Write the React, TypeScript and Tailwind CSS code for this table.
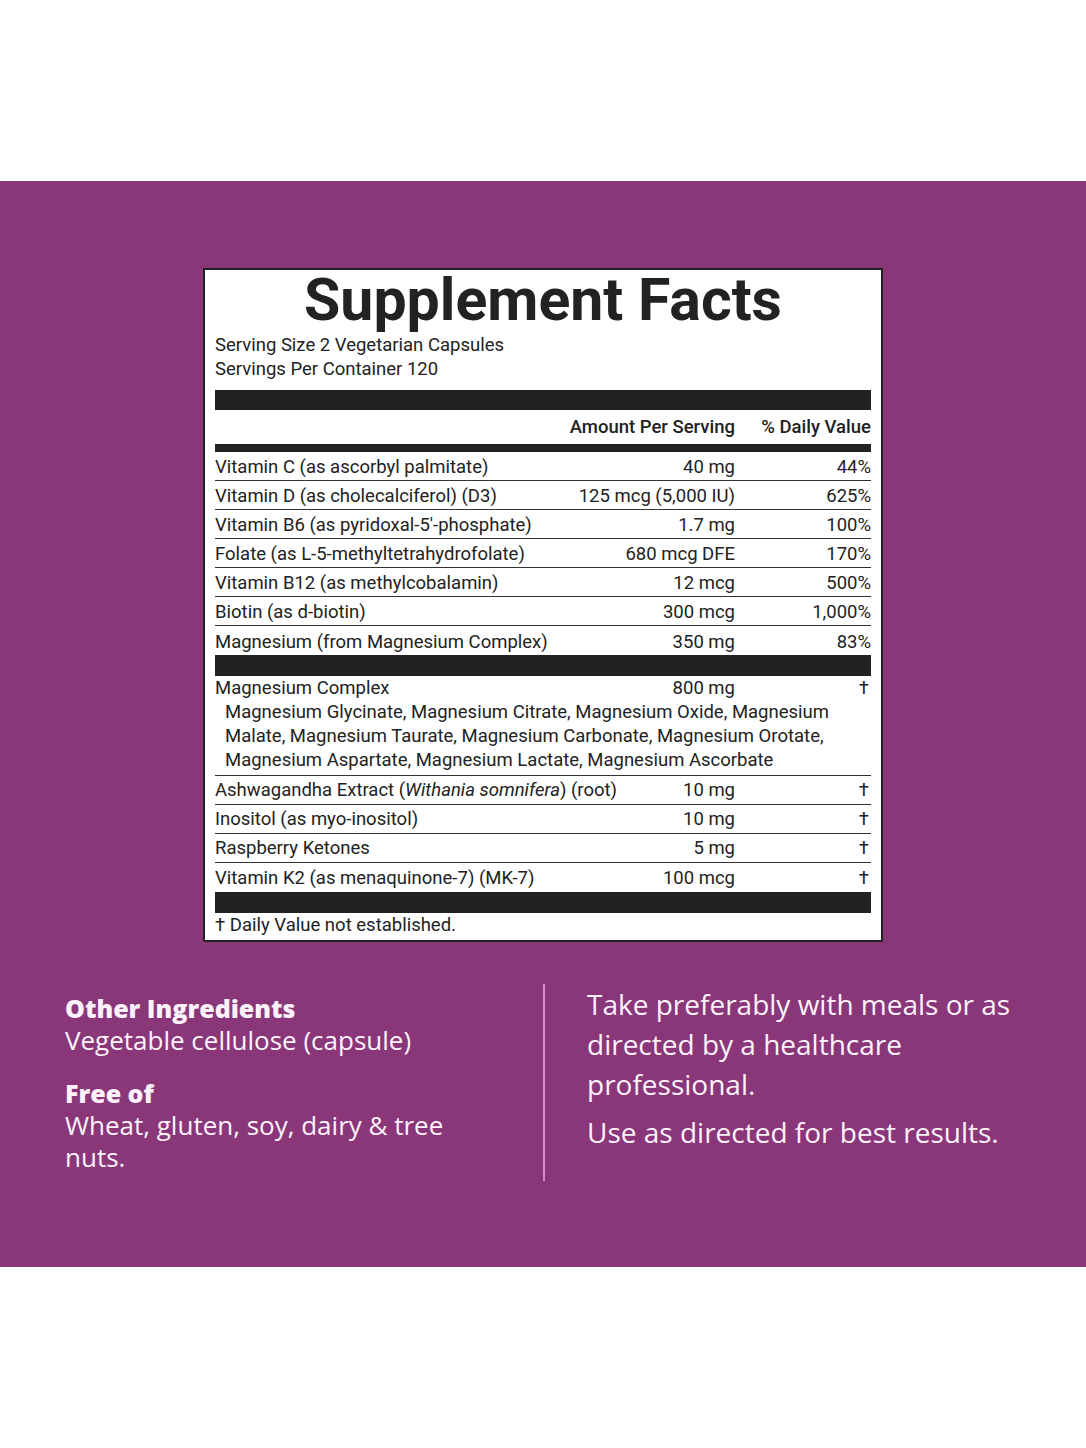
import React from "react";

const rows = [
  { name: "Vitamin C (as ascorbyl palmitate)", amount: "40 mg", dv: "44%" },
  { name: "Vitamin D (as cholecalciferol) (D3)", amount: "125 mcg (5,000 IU)", dv: "625%" },
  { name: "Vitamin B6 (as pyridoxal-5'-phosphate)", amount: "1.7 mg", dv: "100%" },
  { name: "Folate (as L-5-methyltetrahydrofolate)", amount: "680 mcg DFE", dv: "170%" },
  { name: "Vitamin B12 (as methylcobalamin)", amount: "12 mcg", dv: "500%" },
  { name: "Biotin (as d-biotin)", amount: "300 mcg", dv: "1,000%" },
  { name: "Magnesium (from Magnesium Complex)", amount: "350 mg", dv: "83%" },
];

const others = [
  {
    name: (
      <>
        Ashwagandha Extract (<i>Withania somnifera</i>) (root)
      </>
    ),
    amount: "10 mg",
  },
  { name: "Inositol (as myo-inositol)", amount: "10 mg" },
  { name: "Raspberry Ketones", amount: "5 mg" },
  { name: "Vitamin K2 (as menaquinone-7) (MK-7)", amount: "100 mcg" },
];

function Row({ name, amount, dv, last }: { name: React.ReactNode; amount: string; dv: string; last?: boolean }) {
  return (
    <div className={`flex items-center h-[29px] pt-[2px] ${last ? "" : "border-b border-[#333]"}`}>
      <div className="flex-1">{name}</div>
      <div className="text-right">{amount}</div>
      <div className="w-[136px] text-right">{dv}</div>
    </div>
  );
}

export default function App() {
  return (
    <div className="w-[1086px] h-[1448px] bg-white flex flex-col">
      <div className="h-[181px]" />
      <section className="h-[1086px] bg-[#893778] flex flex-col items-center pt-[87px]">
        {/* label */}
        <div className="w-[680px] bg-white border-2 border-[#222] px-[10px] text-[#222] font-['Roboto',sans-serif] text-[18.5px] leading-[24px]">
          <h1 className="text-center font-bold text-[59px] leading-[60px]">
            Supplement Facts
          </h1>
          <div className="mt-[3px]">Serving Size 2 Vegetarian Capsules</div>
          <div>Servings Per Container 120</div>
          <div className="h-[20px] bg-[#222] mt-[9px]" />
          <div className="flex items-center h-[34px] font-medium">
            <div className="flex-1" />
            <div className="text-right">Amount Per Serving</div>
            <div className="w-[136px] text-right">% Daily Value</div>
          </div>
          <div className="h-[8px] bg-[#222]" />
          {rows.map((r, i) => (
            <Row key={i} name={r.name} amount={r.amount} dv={r.dv} last={i === rows.length - 1} />
          ))}
          <div className="h-[21px] bg-[#222]" />
          <div className="border-b border-[#333] pb-[3px]">
            <div className="flex items-center h-[24px]">
              <div className="flex-1">Magnesium Complex</div>
              <div className="text-right">800 mg</div>
              <div className="w-[136px] text-right pr-[2px]">†</div>
            </div>
            <p className="pl-[10px] pr-[14px]">
              Magnesium Glycinate, Magnesium Citrate, Magnesium Oxide, Magnesium Malate, Magnesium Taurate,
              Magnesium Carbonate, Magnesium Orotate, Magnesium Aspartate, Magnesium Lactate, Magnesium Ascorbate
            </p>
          </div>
          {others.map((r, i) => (
            <div
              key={i}
              className={`flex items-center h-[29px] ${i === others.length - 1 ? "" : "border-b border-[#333]"}`}
            >
              <div className="flex-1">{r.name}</div>
              <div className="text-right">{r.amount}</div>
              <div className="w-[136px] text-right pr-[2px]">†</div>
            </div>
          ))}
          <div className="h-[21px] bg-[#222]" />
          <div className="h-[27px] flex items-center pb-[3px]">† Daily Value not established.</div>
        </div>

        {/* bottom info */}
        <div className="w-full grid grid-cols-2 mt-[42px] font-['Open_Sans',sans-serif] text-[#fdf2fb]">
          <div className="pl-[65px] pt-[8px]">
            <h3 className="font-extrabold text-[25px] leading-[32px]">Other Ingredients</h3>
            <p className="text-[26px] leading-[32px]">Vegetable cellulose (capsule)</p>
            <h3 className="font-extrabold text-[25px] leading-[32px] mt-[21px]">Free of</h3>
            <p className="text-[26px] leading-[32px] pr-[70px]">Wheat, gluten, soy, dairy &amp; tree nuts.</p>
          </div>
          <div className="border-l-2 border-[#d98ac6] pl-[42px] pr-[50px] h-[197px]">
            <p className="text-[28px] leading-[40px]">
              Take preferably with meals or as directed by a healthcare professional.
            </p>
            <p className="text-[28px] leading-[40px] mt-[8px]">Use as directed for best results.</p>
          </div>
        </div>
      </section>
      <div className="flex-1" />
    </div>
  );
}
